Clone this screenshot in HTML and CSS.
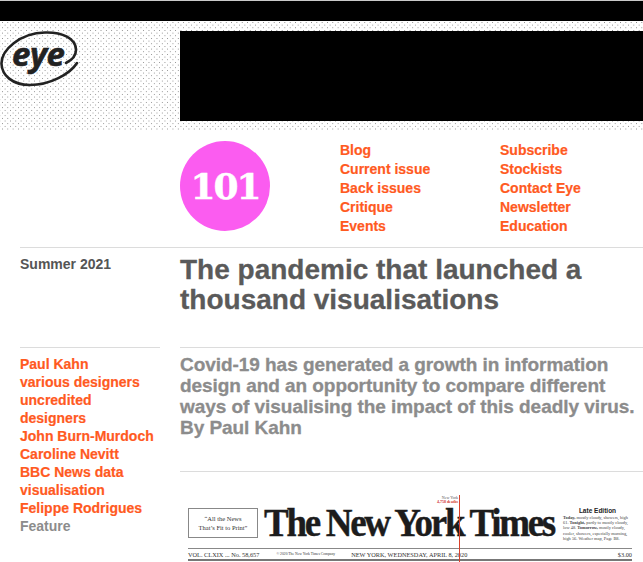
FILE: index.html
```html
<!DOCTYPE html>
<html lang="en">
<head>
<meta charset="utf-8">
<title>Eye Magazine</title>
<link rel="stylesheet" href="styles.css">
</head>
<body>
<div class="topbar"></div>
<header class="hero">
  <a class="logo" href="#" aria-label="Eye">
    <svg width="80" height="70" viewBox="0 21 80 70">
      <path class="swoosh" d="M77 63 C70 74 50 85 30 85 C12 85 2 75 1.500 64 C1 50 20 33 45 32.500 C62 32 76 38 76 50 C76 56 72 60 66 63" />
      <text x="12" y="66" class="logo-text">eye</text>
    </svg>
  </a>
  <div class="banner"></div>
</header>
<section class="navrow">
  <div class="issue"><span>101</span></div>
  <nav class="links">
    <ul>
      <li><a href="#">Blog</a></li>
      <li><a href="#">Current issue</a></li>
      <li><a href="#">Back issues</a></li>
      <li><a href="#">Critique</a></li>
      <li><a href="#">Events</a></li>
    </ul>
    <ul>
      <li><a href="#">Subscribe</a></li>
      <li><a href="#">Stockists</a></li>
      <li><a href="#">Contact Eye</a></li>
      <li><a href="#">Newsletter</a></li>
      <li><a href="#">Education</a></li>
    </ul>
  </nav>
</section>
<main class="article">
  <div class="rule-full"></div>
  <div class="heading-row">
    <p class="season">Summer 2021</p>
    <h1>The pandemic that launched a thousand visualisations</h1>
  </div>
  <div class="body-row">
    <aside class="meta">
      <a href="#">Paul Kahn</a>
      <a href="#">various designers</a>
      <a href="#">uncredited designers</a>
      <a href="#">John Burn-Murdoch</a>
      <a href="#">Caroline Nevitt</a>
      <a href="#">BBC News data visualisation</a>
      <a href="#">Felippe Rodrigues</a>
      <span>Feature</span>
    </aside>
    <div class="content">
      <p class="intro">Covid-19 has generated a growth in information design and an opportunity to compare different ways of visualising the impact of this deadly virus. By Paul Kahn</p>
      <figure class="paper">
        <div class="mast">
          <div class="ear">“All the News<br>That’s Fit to Print”</div>
          <div class="name">The New York Times</div>
          <div class="edition"><b>Late Edition</b><span><b>Today,</b> mostly cloudy, showers, high<br>61. <b>Tonight,</b> partly to mostly cloudy,<br>low 48. <b>Tomorrow,</b> mostly cloudy,<br>cooler, showers, especially morning,<br>high 56. Weather map, Page B8.</span></div>
          <div class="deaths">New York<br><b>4,758 deaths</b></div>
          <div class="redline"></div>
        </div>
        <div class="dateline">
          <span>VOL. CLXIX ... No. 58,657</span>
          <span class="copy">© 2020 The New York Times Company</span>
          <span class="date">NEW YORK, WEDNESDAY, APRIL 8, 2020</span>
          <span class="price">$3.00</span>
        </div>
      </figure>
    </div>
  </div>
</main>
</body>
</html>
```
FILE: styles.css
```css
* { box-sizing: border-box; }
html, body { margin: 0; padding: 0; }
body {
  width: 643px;
  height: 562px;
  overflow: hidden;
  background: #fff;
  font-family: "Liberation Sans", Arial, sans-serif;
  border-top: 1px solid #c9c9c9;
}
a { color: #ff5a1f; text-decoration: none; -webkit-text-stroke: 0.2px #ff5a1f; }
ul { list-style: none; margin: 0; padding: 0; }
.topbar { height: 20px; background: #000; }
.hero {
  height: 109px;
  padding: 10px 0 9px 180px;
  position: relative;
  background-color: #fff;
  background-image:
    conic-gradient(at 1px 1px, transparent 75%, #808080 0),
    conic-gradient(at 1px 1px, transparent 75%, #808080 0);
  background-size: 5.330px 5.330px;
  background-position: 2px 1px, 4.670px 3.670px;
}
.banner { height: 90px; background: #000; }
.logo { position: absolute; left: 0; top: 0; -webkit-text-stroke: 0; }
.logo svg { display: block; }
.swoosh { fill: none; stroke: #222; stroke-width: 2.600; stroke-linecap: round; }
.logo-text { font: italic 700 33px "Open Sans", sans-serif; fill: #222; letter-spacing: -0.500px; stroke: #222; stroke-width: 0.6px; }
.navrow { display: flex; padding: 11px 0 0 180px; height: 117px; }
.issue {
  width: 90px; height: 90px; border-radius: 50%; flex: none;
  background: #fb5cf0; color: #fff;
  display: flex; align-items: center; justify-content: center;
  font: 700 36px "DejaVu Serif", serif; letter-spacing: -2px;
  -webkit-text-stroke: 0.5px #fff;
}
.links { display: flex; padding: 0 0 0 70px; }
.links ul { width: 160px; }
.links li { font-size: 14px; font-weight: 700; line-height: 19px; }
.rule-full { margin-left: 20px; border-top: 1px solid #dcdcdc; }
.heading-row { display: flex; padding: 0 0 0 20px; height: 99px; }
.season { margin: 7px 0 0; width: 160px; flex: none; font-size: 14px; font-weight: 700; line-height: 19px; color: #555; }
h1 { margin: 7px 0 0; font-size: 28px; line-height: 30px; font-weight: 700; color: #5a5a5a; -webkit-text-stroke: 0.3px #5a5a5a; }
.body-row { display: flex; padding-left: 20px; }
.meta { width: 140px; flex: none; border-top: 1px solid #dcdcdc; padding-top: 7px; margin-right: 20px; font-size: 14px; font-weight: 700; line-height: 18px; }
.meta a { display: block; }
.meta span { display: block; color: #8c8c8c; }
.content { flex: 1; border-top: 1px solid #dcdcdc; min-width: 0; }
.intro { margin: 0; padding-top: 6px; height: 124px; font-size: 19px; line-height: 21px; font-weight: 700; color: #8c8c8c; border-bottom: 1px solid #dcdcdc; letter-spacing: -0.050px; -webkit-text-stroke: 0.3px #8c8c8c; }
.paper { margin: 0; position: relative; padding: 0 11px 0 8px; font-family: "Liberation Serif", serif; color: #222; }
.mast { height: 76px; display: flex; align-items: flex-start; position: relative; padding-top: 35px; }
.ear { width: 70px; height: 30px; margin-top: 1px; border: 1px solid #888; font-size: 6.500px; line-height: 9px; text-align: center; padding-top: 5px; color: #333; flex: none; }
.name { font: 700 37px/36px "Liberation Serif", serif; margin-left: 6px; white-space: nowrap; letter-spacing: -2.300px; width: 299px; flex: none; color: #1c1c1c; transform: scaleY(1.1); transform-origin: left bottom; -webkit-text-stroke: 0.4px #1c1c1c; }
.edition { width: 69px; flex: none; font-size: 4.400px; line-height: 5.200px; color: #444; white-space: nowrap; }
.edition > b { display: block; font: 700 6.500px/8px "Liberation Sans", sans-serif; text-align: center; color: #222; }
.edition span { display: block; }
.deaths { position: absolute; left: 241px; top: 24px; font-size: 4px; line-height: 4px; text-align: right; width: 29px; color: #555; }
.deaths b { color: #d0342c; }
.redline { position: absolute; left: 271px; top: 23px; width: 1px; height: 67px; background: #d9412b; }
.dateline { display: flex; align-items: center; height: 13px; border-top: 1px solid #888; border-bottom: 2px solid #777; font-size: 6.300px; color: #333; white-space: nowrap; }
.copy { font-size: 3.700px; margin-left: 17px; }
.date { margin-left: 16px; }
.price { margin-left: auto; }
```
